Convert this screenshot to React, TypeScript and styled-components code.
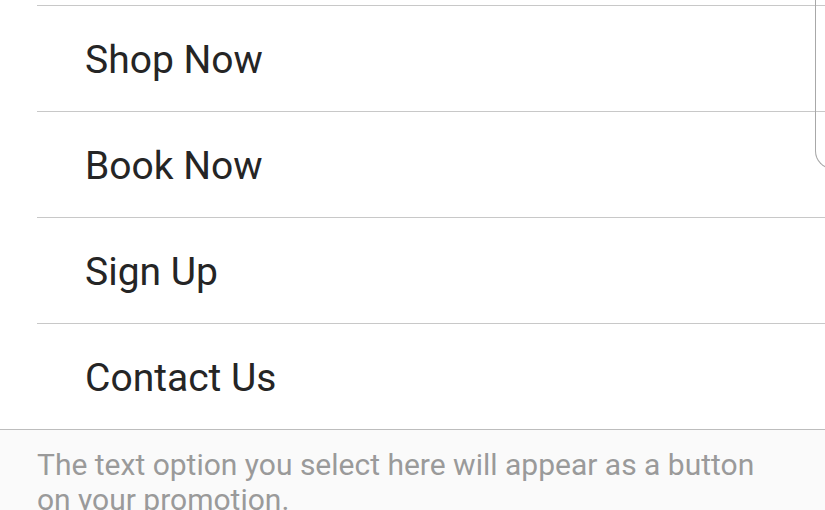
import styled, { createGlobalStyle } from 'styled-components';

const GlobalStyle = createGlobalStyle`
  html, body {
    margin: 0;
    padding: 0;
    background: #fff;
    overflow: hidden;
  }
  * {
    box-sizing: border-box;
  }
`;

const options = ['Shop Now', 'Book Now', 'Sign Up', 'Contact Us'];

function App() {
  return (
    <Screen>
      <GlobalStyle />
      <SheetEdge />
      <OptionList>
        {options.map((label) => (
          <OptionRow key={label}>{label}</OptionRow>
        ))}
      </OptionList>
      <HelpFooter>
        The text option you select here will appear as a button on your promotion.
      </HelpFooter>
    </Screen>
  );
}

export default App;

const Screen = styled.div`
  position: relative;
  width: 825px;
  height: 510px;
  overflow: hidden;
  font-family: Roboto, 'Noto Sans', sans-serif;
`;

const SheetEdge = styled.div`
  position: absolute;
  left: 815px;
  top: -20px;
  width: 30px;
  height: 189px;
  border-left: 1.5px solid #a8a8a8;
  border-bottom: 1.5px solid #a8a8a8;
  border-bottom-left-radius: 18px;
`;

const OptionList = styled.div`
  display: flex;
  flex-direction: column;
  padding-top: 5px;
`;

const OptionRow = styled.div`
  display: flex;
  align-items: center;
  height: 106px;
  margin-left: 37px;
  padding-left: 48px;
  padding-top: 2px;
  border-top: 1px solid #c8c8c8;
  font-size: 39px;
  color: #252525;
`;

const HelpFooter = styled.div`
  background: #fafafa;
  border-top: 1px solid #bdbdbd;
  padding: 17px 50px 0 37px;
  font-size: 30px;
  line-height: 35px;
  color: #9a9a9a;
  height: 200px;
`;
